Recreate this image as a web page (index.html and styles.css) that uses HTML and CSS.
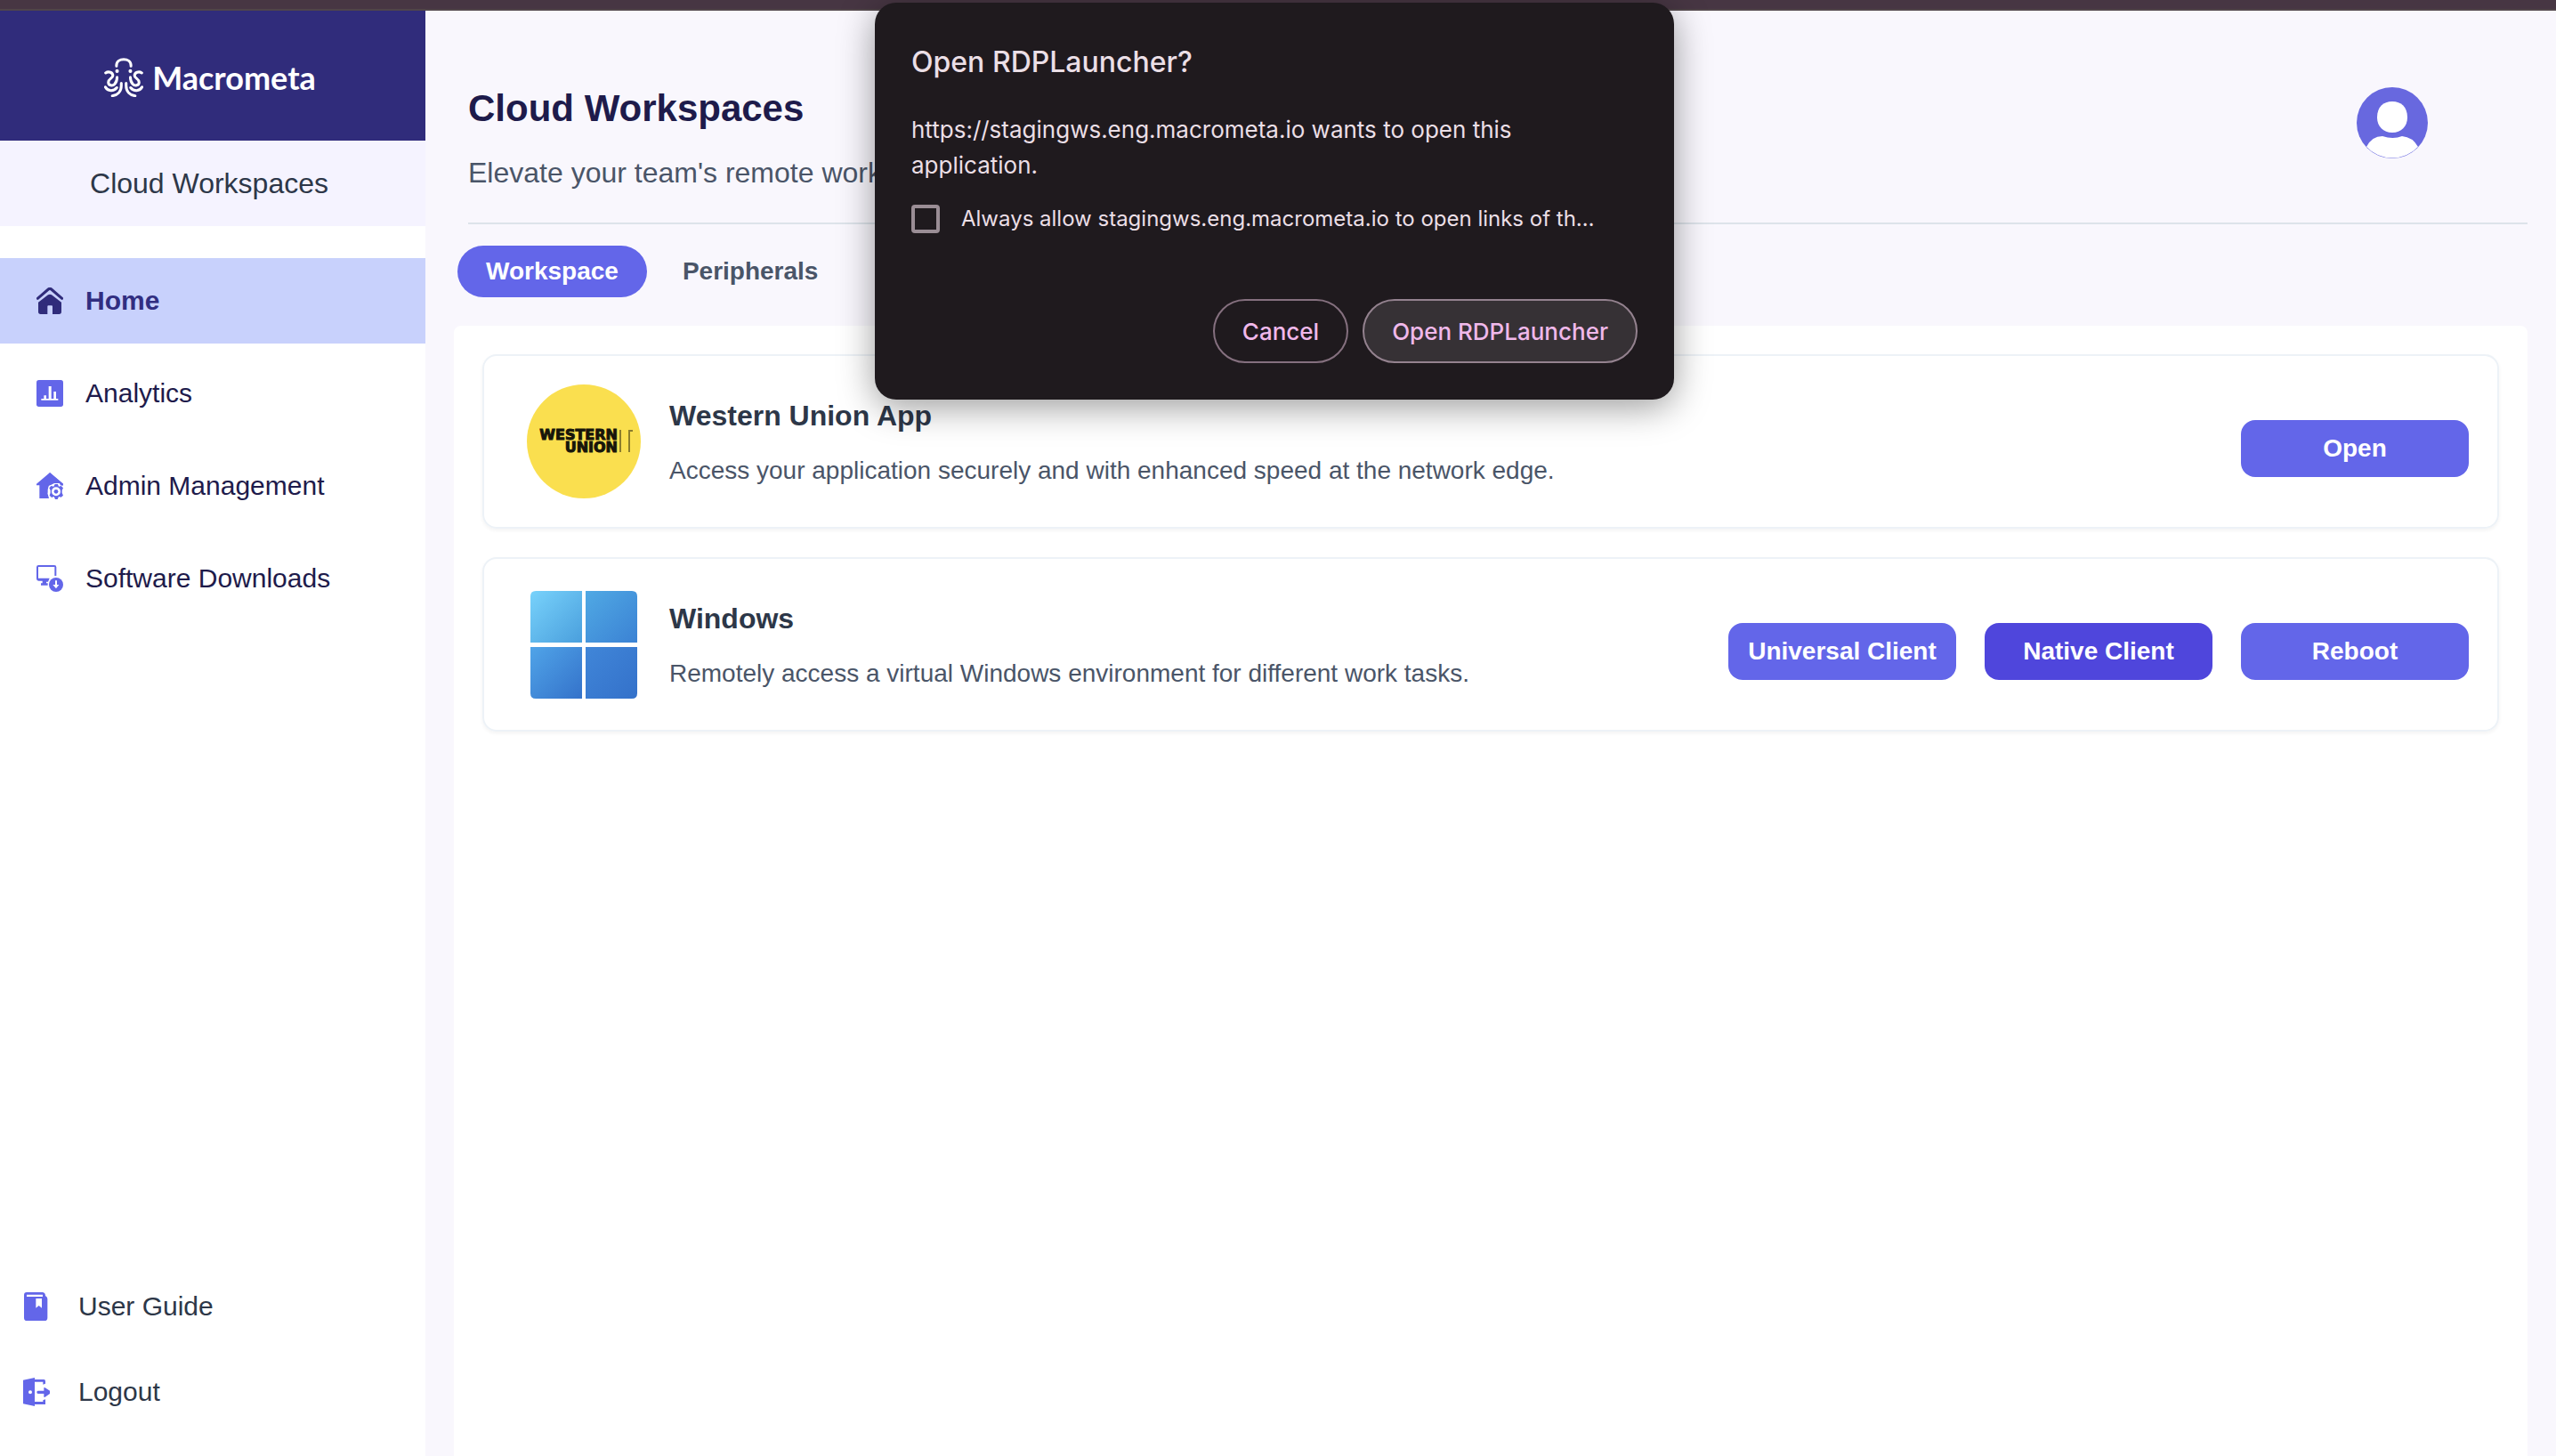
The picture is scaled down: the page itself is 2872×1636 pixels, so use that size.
FILE: index.html
```html
<!DOCTYPE html>
<html lang="en">
<head>
<meta charset="utf-8">
<title>Cloud Workspaces</title>
<link rel="stylesheet" href="styles.css">
</head>
<body>
<div class="window-edge"></div>
<div class="app">
  <aside class="sidebar">
    <div class="brand">
      <svg class="brand-mark" viewBox="0 0 130 130" fill="none" stroke="currentColor" stroke-width="9" stroke-linecap="round" aria-hidden="true">
        <path d="M41 27V25C41 12 52 5 65 5S89 12 89 25V27"/>
        <path d="M5 50C15 43 29 49 29 59C29 68 14 69 14 81C14 92 28 95 35 87C41 80 43 74 43 64"/>
        <path d="M4 97C12 112 32 112 42 99"/>
        <path d="M57 84V92C57 112 44 124 27 126"/>
        <path d="M125 50C115 43 101 49 101 59C101 68 116 69 116 81C116 92 102 95 95 87C89 80 87 74 87 64"/>
        <path d="M126 97C118 112 98 112 88 99"/>
        <path d="M73 84V92C73 112 86 124 103 126"/>
        <g fill="currentColor" stroke="none"><circle cx="43" cy="44" r="6"/><circle cx="87" cy="44" r="6"/></g>
      </svg>
      <span class="brand-name">Macrometa</span>
    </div>
    <div class="product">Cloud Workspaces</div>
    <nav class="nav" aria-label="Main">
      <a class="nav-item active" href="#home">
        <svg class="icon" viewBox="0 0 90 90" fill="currentColor" aria-hidden="true">
          <path d="M4 37L40 6Q45 2 50 6L86 37" fill="none" stroke="currentColor" stroke-width="9" stroke-linecap="round"/>
          <path d="M6 50L39 25Q45 21 51 25L84 50V82Q84 90 76 90H54V64Q54 61 51 61H40Q37 61 37 64V90H14Q6 90 6 82Z"/>
        </svg>
        <span>Home</span>
      </a>
      <a class="nav-item" href="#analytics">
        <svg class="icon" viewBox="0 0 90 90" fill="currentColor" aria-hidden="true">
          <rect width="90" height="90" rx="8"/>
          <path fill="#fff" d="M16 63H25V52H33V63H41V21H50V63H58V39H66V63H73V68H16Z"/>
        </svg>
        <span>Analytics</span>
      </a>
      <a class="nav-item" href="#admin">
        <svg class="icon" viewBox="0 0 90 90" fill="currentColor" aria-hidden="true">
          <path d="M45 0L90 38V44H78Q66 30 54 38Q38 44 40 60L38 72L42 87H10V43H0V38Z"/>
          <path fill="#fff" d="M58 34H76L82 44H90V87H46L38 72V58L42 43H52Z"/>
          <path fill-rule="evenodd" d="M62 39H72L75 47L83 45L90 52L86 60V68L90 77L83 83L75 81L71 90H63L59 81L51 84L44 77L47 68V60L43 52L49 45L58 47ZM66 49A15 15 0 1 0 66 79A15 15 0 1 0 66 49Z"/>
          <circle cx="66" cy="64" r="7"/>
          <path d="M45 0L90 38V43L80 36H60L40 45L34 30Z"/>
        </svg>
        <span>Admin Management</span>
      </a>
      <a class="nav-item" href="#downloads">
        <svg class="icon" viewBox="0 0 90 90" fill="currentColor" aria-hidden="true">
          <path fill-rule="evenodd" d="M7 0H60Q67 0 67 7V36H61V6H6V44H44L39 56H33V61H38V68H15V61H20V53H7Q0 53 0 46V7Q0 0 7 0Z"/>
          <circle cx="66" cy="66" r="24"/>
          <path fill="#fff" d="M63 52H69V66H76L66 79L55 66H63Z"/>
        </svg>
        <span>Software Downloads</span>
      </a>
    </nav>
    <nav class="nav-footer" aria-label="Support">
      <a class="footer-item" href="#guide">
        <svg class="footer-icon" viewBox="0 0 90 96" fill="currentColor" aria-hidden="true">
          <path fill-rule="evenodd" d="M12 0H66Q75 2 75 12Q82 16 82 22V86Q82 96 72 96H13Q3 96 3 86V10Q3 0 12 0ZM12 8V15H66V8Z"/>
          <path fill="#fff" d="M43 21H63V53L53 45L43 53Z"/>
        </svg>
        <span>User Guide</span>
      </a>
      <a class="footer-item" href="#logout">
        <svg class="footer-icon" viewBox="0 0 90 96" fill="currentColor" aria-hidden="true">
          <path fill-rule="evenodd" d="M0 8L39 0V6H70Q75 6 75 12V20L67 23V14H39V81H67V76L75 73V90H39V96L0 88ZM24 43A6 6 0 1 0 24 55A6 6 0 1 0 24 43Z"/>
          <path d="M50 44H70V35Q70 32 74 34L90 44V54L74 65Q70 67 70 63V54H50Q46 54 46 49T50 44Z"/>
        </svg>
        <span>Logout</span>
      </a>
    </nav>
  </aside>

  <main class="main">
    <header class="page-header">
      <div class="heading">
        <h1>Cloud Workspaces</h1>
        <p>Elevate your team's remote work</p>
      </div>
      <button class="avatar" type="button" aria-label="Account">
        <svg viewBox="0 0 80 80" aria-hidden="true">
          <circle cx="40" cy="40" r="40" fill="#6868df"/>
          <path fill="#fff" d="M23 34C23 22 30 16 40 16S57 22 57 34C57 44 50 51 40 51S23 44 23 34Z"/>
          <path fill="#fff" d="M11 67Q17 55 29 55Q41 59 51 55Q63 56 69 67A40 40 0 0 1 11 67Z"/>
        </svg>
      </button>
    </header>
    <div class="tabs" role="tablist">
      <button class="tab selected" type="button" role="tab" aria-selected="true">Workspace</button>
      <button class="tab" type="button" role="tab" aria-selected="false">Peripherals</button>
    </div>
    <section class="panel">
      <article class="card">
        <svg class="card-logo" viewBox="0 0 128 128" role="img" aria-label="Western Union logo">
          <circle cx="64" cy="64" r="64" fill="#fadf4f"/>
          <g class="wu-text"><text x="102" y="62" text-anchor="end">WESTERN</text><text x="102" y="76" text-anchor="end">UNION</text></g>
          <path d="M105 51V76M115 76V52H119" fill="none" stroke="#8c7d2c" stroke-width="2"/>
        </svg>
        <div class="card-text">
          <h2>Western Union App</h2>
          <p>Access your application securely and with enhanced speed at the network edge.</p>
        </div>
        <div class="actions">
          <button class="btn" type="button">Open</button>
        </div>
      </article>
      <article class="card">
        <svg class="card-logo" viewBox="0 0 128 128" role="img" aria-label="Windows logo">
          <defs>
            <linearGradient id="w1" x1="0" y1="0" x2="1" y2="1"><stop offset="0" stop-color="#78d2fb"/><stop offset="1" stop-color="#4a9fdd"/></linearGradient>
            <linearGradient id="w2" x1="0" y1="0" x2="1" y2="1"><stop offset="0" stop-color="#50a9e4"/><stop offset="1" stop-color="#3b82d4"/></linearGradient>
            <linearGradient id="w3" x1="0" y1="0" x2="1" y2="1"><stop offset="0" stop-color="#50a4e8"/><stop offset="1" stop-color="#3472ca"/></linearGradient>
            <linearGradient id="w4" x1="0" y1="0" x2="1" y2="1"><stop offset="0" stop-color="#4086d8"/><stop offset="1" stop-color="#3471ca"/></linearGradient>
          </defs>
          <path fill="url(#w1)" d="M10 4H62V62H4V10Q4 4 10 4Z"/>
          <path fill="url(#w2)" d="M66 4H118Q124 4 124 10V62H66Z"/>
          <path fill="url(#w3)" d="M4 67H62V125H10Q4 125 4 119Z"/>
          <path fill="url(#w4)" d="M66 67H124V119Q124 125 118 125H66Z"/>
        </svg>
        <div class="card-text">
          <h2>Windows</h2>
          <p>Remotely access a virtual Windows environment for different work tasks.</p>
        </div>
        <div class="actions">
          <button class="btn" type="button">Universal Client</button>
          <button class="btn btn-dark" type="button">Native Client</button>
          <button class="btn" type="button">Reboot</button>
        </div>
      </article>
    </section>
  </main>
</div>

<dialog class="prompt" open aria-labelledby="prompt-title">
  <h2 id="prompt-title">Open RDPLauncher?</h2>
  <p>https://stagingws.eng.macrometa.io wants to open this application.</p>
  <div class="remember">
    <input type="checkbox" id="always-allow">
    <label for="always-allow">Always allow stagingws.eng.macrometa.io to open links of th…</label>
  </div>
  <div class="prompt-actions">
    <button class="pill" type="button">Cancel</button>
    <button class="pill pill-focus" type="button">Open RDPLauncher</button>
  </div>
</dialog>
</body>
</html>
```
FILE: styles.css
```css
* {
  box-sizing: border-box;
}

body {
  margin: 0;
  min-height: 100vh;
  display: flex;
  flex-direction: column;
  background: #f9f7fd;
  font-family: "Liberation Sans", Arial, sans-serif;
  color: #2d3748;
}

h1, h2, p {
  margin: 0;
}

a {
  color: inherit;
  text-decoration: none;
}

button {
  font: inherit;
  border: 0;
  cursor: pointer;
}

.window-edge {
  height: 12px;
  background: #473643;
  border-bottom: 2px solid #504549;
}

.app {
  flex: 1;
  display: flex;
}

/* Sidebar */
.sidebar {
  flex: none;
  width: 478px;
  display: flex;
  flex-direction: column;
  background: #fff;
}

.brand {
  height: 146px;
  display: flex;
  align-items: center;
  justify-content: center;
  gap: 10px;
  padding: 4px 6px 0 0;
  background: #302c7b;
  color: #fff;
}

.brand-mark {
  width: 44px;
  height: 44px;
}

.brand-name {
  font-family: Lato, sans-serif;
  font-weight: 700;
  font-size: 36px;
  line-height: 44px;
}

.product {
  height: 96px;
  padding-right: 8px;
  text-align: center;
  font-size: 32px;
  line-height: 96px;
  background: #f5f3ff;
}

.nav {
  display: flex;
  flex-direction: column;
  gap: 8px;
  padding-top: 36px;
}

.nav-item {
  height: 96px;
  display: flex;
  align-items: center;
  gap: 25px;
  padding-left: 41px;
  font-size: 30px;
  color: #1e1b4b;
}

.nav-item.active {
  background: #c8d1fc;
  color: #312e81;
  font-weight: 700;
}

.icon {
  width: 30px;
  height: 30px;
  color: #6366e9;
}

.active .icon {
  color: #302c7b;
}

.nav-footer {
  margin-top: auto;
  padding-bottom: 24px;
}

.footer-item {
  height: 96px;
  display: flex;
  align-items: center;
  gap: 32px;
  padding-left: 26px;
  font-size: 30px;
}

.footer-icon {
  width: 30px;
  height: 32px;
  color: #6366e9;
}

/* Main column */
.main {
  flex: 1;
  min-width: 0;
  display: flex;
  flex-direction: column;
  padding: 0 32px;
}

.page-header {
  display: flex;
  justify-content: space-between;
  align-items: flex-start;
  margin-left: 16px;
  padding: 86px 112px 36px 0;
  border-bottom: 2px solid #dde3ea;
}

.heading {
  display: flex;
  flex-direction: column;
  gap: 28px;
}

.heading h1 {
  font-size: 42px;
  line-height: 48px;
  color: #1e1b4b;
}

.heading p {
  font-size: 32px;
  line-height: 40px;
  color: #4a5568;
}

.avatar {
  width: 80px;
  height: 80px;
  padding: 0;
  background: none;
  border-radius: 50%;
}

.avatar svg {
  display: block;
}

.tabs {
  display: flex;
  gap: 8px;
  padding: 24px 4px 32px;
}

.tab {
  height: 58px;
  padding: 0 32px;
  border-radius: 29px;
  background: none;
  font-size: 28px;
  font-weight: 700;
  color: #4a5568;
}

.tab.selected {
  background: #6366e9;
  color: #fff;
}

.panel {
  flex: 1;
  display: flex;
  flex-direction: column;
  gap: 32px;
  padding: 32px;
  background: #fff;
  border-radius: 8px 8px 0 0;
}

.card {
  min-height: 196px;
  display: flex;
  align-items: center;
  gap: 32px;
  padding: 0 32px 0 48px;
  border: 2px solid #edf2f7;
  border-radius: 16px;
  box-shadow: 0 2px 4px rgba(0, 0, 0, 0.05);
}

.card-logo {
  flex: none;
  width: 128px;
  height: 128px;
}

.wu-text {
  font-family: "DejaVu Sans", sans-serif;
  font-weight: 700;
  font-size: 16px;
  fill: #17150a;
  stroke: #17150a;
  stroke-width: 1;
}

.card-text {
  flex: 1;
  display: flex;
  flex-direction: column;
  gap: 22px;
  padding-top: 4px;
}

.card-text h2 {
  font-size: 32px;
  line-height: 40px;
}

.card-text p {
  font-size: 28px;
  line-height: 40px;
  color: #4a5568;
}

.actions {
  display: flex;
  gap: 32px;
  padding-top: 16px;
}

.btn {
  width: 256px;
  height: 64px;
  padding: 0;
  border-radius: 16px;
  background: #6366e9;
  color: #fff;
  font-size: 28px;
  font-weight: 700;
}

.btn-dark {
  background: #4f46dc;
}

/* Browser prompt over the page */
.prompt {
  position: absolute;
  top: 3px;
  left: 0;
  right: 8px;
  width: 898px;
  margin: 0 auto;
  padding: 43px 41px 41px;
  border: 0;
  border-radius: 24px;
  background: #1f1a1e;
  color: #ebdfe6;
  font-family: Inter, sans-serif;
  box-shadow: 0 8px 40px rgba(0, 0, 0, 0.4);
}

.prompt h2 {
  font-size: 32px;
  line-height: 48px;
  font-weight: 500;
}

.prompt p {
  margin-top: 32px;
  font-size: 26px;
  line-height: 40px;
}

.remember {
  display: flex;
  align-items: center;
  gap: 24px;
  margin-top: 22px;
  font-size: 24px;
  line-height: 36px;
  white-space: nowrap;
}

.remember input {
  appearance: none;
  flex: none;
  width: 32px;
  height: 32px;
  margin: 0;
  border: 4px solid #9a8d95;
  border-radius: 4px;
}

.prompt-actions {
  display: flex;
  justify-content: flex-end;
  gap: 16px;
  margin-top: 72px;
}

.pill {
  height: 72px;
  padding: 0 31px;
  border: 2px solid #85707f;
  border-radius: 36px;
  background: none;
  color: #f0b8ea;
  font-size: 26px;
  font-weight: 500;
}

.pill-focus {
  background: #363135;
  border-color: #94828f;
}
```
